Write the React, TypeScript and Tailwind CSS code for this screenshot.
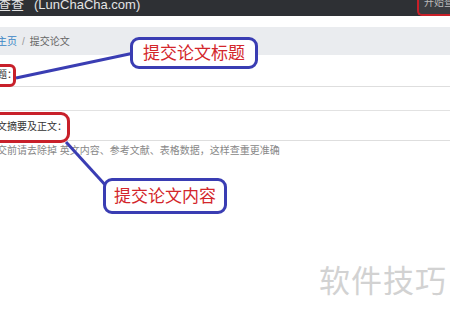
import React from 'react';

const FONT = { fontFamily: '"Liberation Sans", "Noto Sans CJK SC", sans-serif' };

/** Blue callout with red caption, pinned over the form like a screenshot annotation. */
function Callout({ text, className }: { text: string; className: string }) {
  return (
    <div
      className={`absolute flex items-center justify-center rounded-[9px] border-[3px] border-[#3a3db3] bg-white text-[17px] leading-none text-[#d3262b] ${className}`}
    >
      {text}
    </div>
  );
}

export default function App() {
  return (
    <div className="relative h-[322px] w-[450px] overflow-hidden bg-white" style={FONT}>
      {/* top bar (cropped) */}
      <header className="flex h-[16px] items-end justify-between overflow-hidden bg-[#2e3034]">
        <p className="-ml-[2px] mb-[5px] flex gap-[10px] whitespace-nowrap text-[13px] leading-none text-[#e4e4e4]">
          <span>查查</span>
          <span>(LunChaCha.com)</span>
        </p>
        <div className="mr-[-6px] flex h-[16px] w-[39px] items-end overflow-hidden rounded-bl-[5px] border-b-[2px] border-l-[2px] border-[#c91f28] bg-[#3b3d41] pl-[5px]">
          <span className="mb-[6px] whitespace-nowrap text-[10px] leading-none text-[#bbbbbb]">开始查重</span>
        </div>
      </header>

      <div className="h-[11px]" />

      {/* breadcrumb */}
      <nav className="flex h-[28px] items-center gap-[5px] bg-[#eaecef] text-[10px] text-[#666]">
        <span className="-ml-[3px] text-[#3b86c6]">主页</span>
        <span className="text-[#999]">/</span>
        <span>提交论文</span>
      </nav>

      {/* form */}
      <section className="pt-[13px] text-[10px] text-[#333]">
        <p className="-ml-[3px] leading-[14px]">题：</p>
        <div className="mt-[4px] h-[24px] border-t border-[#dedede]" />
        <div className="flex h-[30px] items-center border-t border-[#e2e2e2] pt-[3px]">
          <p className="-ml-[3px] leading-[14px]">文摘要及正文：</p>
        </div>
        <div className="border-t border-[#dedede] pt-[3px]">
          <p className="-ml-[3px] whitespace-nowrap text-[10px] leading-[14px] text-[#888]">
            交前请去除掉 英文内容、参考文献、表格数据，这样查重更准确
          </p>
        </div>
      </section>

      {/* red highlight boxes */}
      <div className="absolute left-[-6px] top-[64px] h-[23px] w-[22px] rounded-[6px] border-[3px] border-[#c8202a]" />
      <div className="absolute left-[-8px] top-[112px] h-[31px] w-[78px] rounded-[9px] border-[3px] border-[#c8202a]" />

      {/* connector lines */}
      <svg className="absolute left-0 top-0" width="450" height="322">
        <line x1="16" y1="78" x2="134" y2="53" stroke="#3a3db3" strokeWidth="3" />
        <line x1="66" y1="142" x2="108" y2="188" stroke="#3a3db3" strokeWidth="3" />
      </svg>

      <Callout text="提交论文标题" className="left-[130px] top-[37px] h-[32px] w-[128px]" />
      <Callout text="提交论文内容" className="left-[103px] top-[178px] h-[36px] w-[124px]" />

      {/* watermark */}
      <p className="absolute left-[319px] top-[266px] text-[31px] leading-none tracking-[1px] text-[#d2d2d2]">
        软件技巧
      </p>
    </div>
  );
}
